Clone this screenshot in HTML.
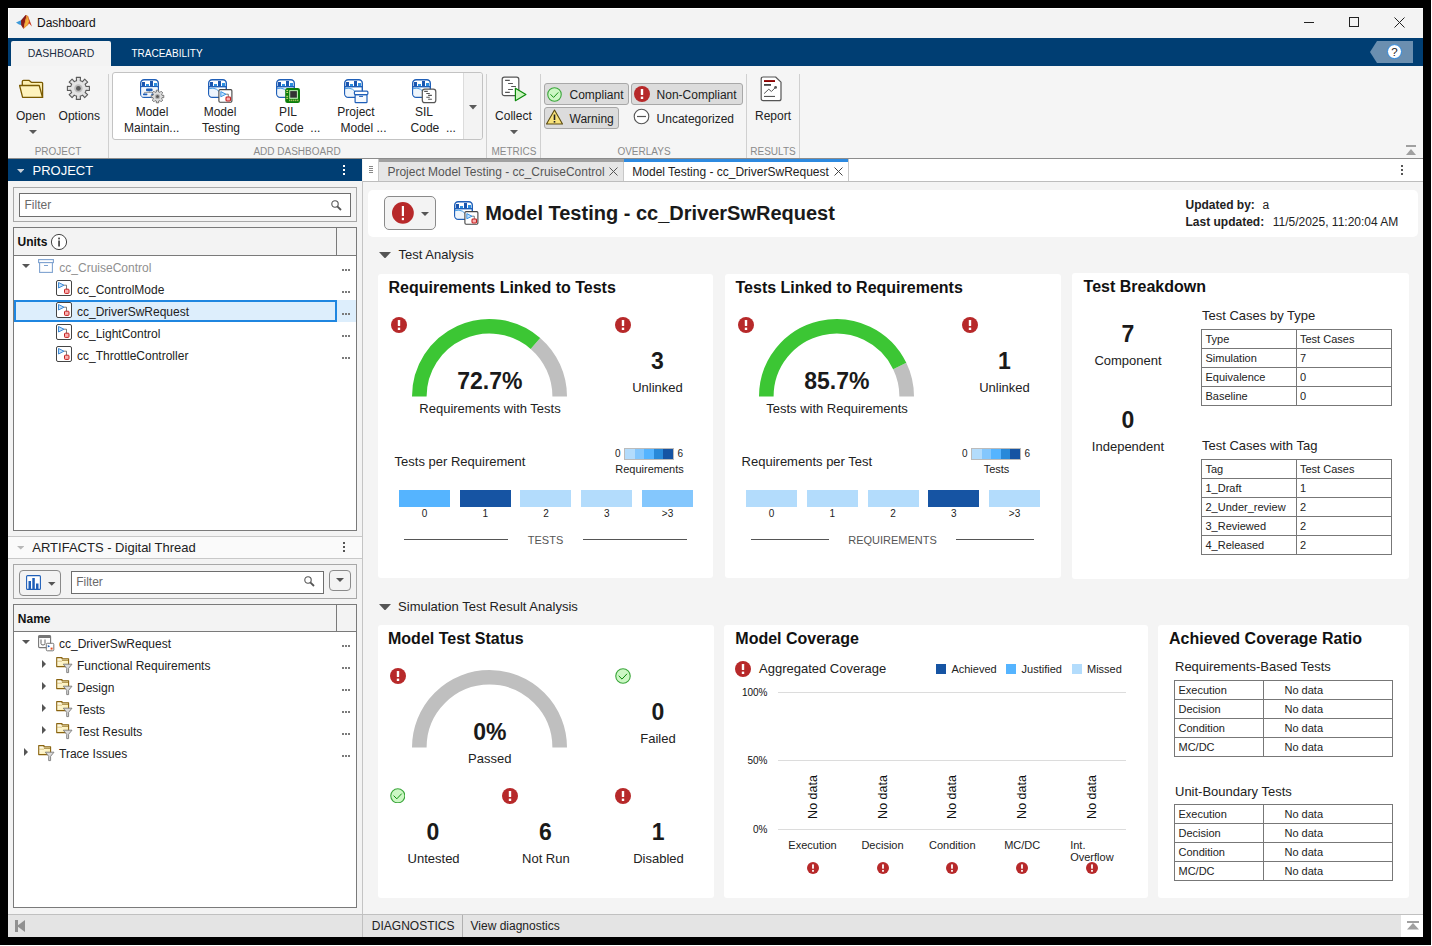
<!DOCTYPE html>
<html><head><meta charset="utf-8"><title>Dashboard</title><style>
*{margin:0;padding:0;box-sizing:border-box}
html,body{width:1432px;height:946px;overflow:hidden;background:#fff;font-family:"Liberation Sans", sans-serif}
.a{position:absolute}
.t{white-space:nowrap}
</style></head><body><div class="a" style="left:0px;top:0px;width:1431px;height:945px;background:#000"></div>
<div class="a" style="left:8px;top:8px;width:1415px;height:929px;background:#f3f3f3"></div>
<div class="a" style="left:8px;top:8px;width:1415px;height:30px;background:#f3f3f3;border-top:1px solid #fff;border-left:1px solid #fff"></div>
<svg class="a" style="left:12px;top:12px;" width="24" height="20" viewBox="0 0 24 20"><path d="M4 10.5 L9 8.2 L13.6 3.4 L12 10 L10 13.2 L7 12.4 Z" fill="#3d9ad9"/><path d="M9 8.6 L13.6 3 L14.8 3.2 L13.2 9.5 L11.5 17 L9.2 13.2 Z" fill="#8c1c16"/><path d="M14.6 3 L16.2 4.2 L17.4 9.5 L15.6 13.2 L11.5 17 L12.8 10.5 Z" fill="#e98b2c"/><path d="M13.8 9 L15.4 5 L16.8 9.5 L15.2 12.5 L12.2 15.8 Z" fill="#f3b23c"/><path d="M15.8 3.6 L19.6 13.6 L20 14.6 L17.2 11.4 L15.6 13.2 L17.2 9.5 Z" fill="#c8361e"/></svg>
<div class="a t" style="font-size:12px;line-height:14px;top:16.00px;color:#111;left:37px;">Dashboard</div>
<div class="a" style="left:1304px;top:22px;width:10px;height:1px;background:#222"></div>
<div class="a" style="left:1349px;top:17px;width:10px;height:10px;border:1px solid #222"></div>
<svg class="a" style="left:1394px;top:17px;" width="11" height="11" viewBox="0 0 11 11"><path d="M0.5 0.5 L10.5 10.5 M10.5 0.5 L0.5 10.5" stroke="#222" stroke-width="1"/></svg>
<div class="a" style="left:8px;top:38px;width:1415px;height:28px;background:#003e73"></div>
<div class="a" style="left:11px;top:41px;width:100px;height:25px;background:#f3f3f3;border-radius:2px 2px 0 0"></div>
<div class="a t" style="font-size:10.5px;line-height:13px;top:47.00px;color:#1d2f45;left:11.00px;width:100px;text-align:center;">DASHBOARD</div>
<div class="a t" style="font-size:10px;line-height:12px;top:48.00px;color:#ffffff;left:117.00px;width:100px;text-align:center;">TRACEABILITY</div>
<svg class="a" style="left:1369px;top:41px;" width="45" height="23" viewBox="0 0 45 23"><polygon points="8,0 44,0 44,22 8,22 1,11" fill="#6b8fb0"/><circle cx="25.5" cy="10.6" r="7" fill="#fff" stroke="#2f8be0" stroke-width="1"/><text x="25.5" y="14.6" text-anchor="middle" font-family="Liberation Sans" font-size="11.5" fill="#222">?</text></svg>
<div class="a" style="left:8px;top:66px;width:1415px;height:93px;background:#f5f5f5"></div>
<svg class="a" style="left:14px;top:72px;" width="32" height="32" viewBox="0 0 32 32"><path d="M8.3 13.5 V9.5 Q8.3 8.3 9.5 8.3 L14.9 8.3 L17.3 10.3 L27.6 10.3 Q28.6 10.3 28.6 11.3 L28.6 25.4 L10 25.4 Z" fill="#fdf0b0" stroke="#7a5a00" stroke-width="1.3" stroke-linejoin="round"/><path d="M5.6 13.5 L25.2 13.5 L28.5 25.4 L8.6 25.4 Z" fill="#fef3bd" stroke="#7a5a00" stroke-width="1.3" stroke-linejoin="round"/></svg>
<svg class="a" style="left:62px;top:72px;" width="32" height="32" viewBox="0 0 32 32"><path d="M23.70,13.38 L24.08,14.56 L27.40,14.30 L27.40,18.50 L24.08,18.24 L23.70,19.42 L23.14,20.53 L25.66,22.70 L22.70,25.66 L20.53,23.14 L19.42,23.70 L18.24,24.08 L18.50,27.40 L14.30,27.40 L14.56,24.08 L13.38,23.70 L12.27,23.14 L10.10,25.66 L7.14,22.70 L9.66,20.53 L9.10,19.42 L8.72,18.24 L5.40,18.50 L5.40,14.30 L8.72,14.56 L9.10,13.38 L9.66,12.27 L7.14,10.10 L10.10,7.14 L12.27,9.66 L13.38,9.10 L14.56,8.72 L14.30,5.40 L18.50,5.40 L18.24,8.72 L19.42,9.10 L20.53,9.66 L22.70,7.14 L25.66,10.10 L23.14,12.27 Z" fill="#e2e2e2" stroke="#5a5a5a" stroke-width="1.1" stroke-linejoin="round"/><circle cx="16.4" cy="16.4" r="4.2" fill="#bdbdbd"/><circle cx="16.4" cy="16.4" r="2.4" fill="#5a5a5a"/></svg>
<div class="a t" style="font-size:12px;line-height:14px;top:109.00px;color:#222;left:0.70px;width:60px;text-align:center;">Open</div>
<div class="a t" style="font-size:12px;line-height:14px;top:109.00px;color:#222;left:49.30px;width:60px;text-align:center;">Options</div>
<svg class="a" style="left:28.5px;top:130px;" width="8" height="4" viewBox="0 0 8 4"><polygon points="0,0 8,0 4.0,4" fill="#5a5a5a"/></svg>
<div class="a t" style="font-size:10px;line-height:12px;top:146.00px;color:#8a8a8a;left:8.00px;width:100px;text-align:center;">PROJECT</div>
<div class="a" style="left:108px;top:74px;width:1px;height:84px;background:#d0d0d0"></div>
<div class="a" style="left:112px;top:72px;width:371px;height:68px;background:#fff;border:1px solid #c3c3c3;border-radius:3px"></div>
<div class="a" style="left:463px;top:73px;width:19px;height:66px;background:#f3f3f3;border-left:1px solid #dcdcdc;border-radius:0 3px 3px 0"></div>
<svg class="a" style="left:469px;top:105px;" width="8" height="4.5" viewBox="0 0 8 4.5"><polygon points="0,0 8,0 4.0,4.5" fill="#5a5a5a"/></svg>
<svg class="a" style="left:140px;top:79px;" width="26" height="26" viewBox="0 0 26 26"><rect x="0.7" y="0.7" width="17.6" height="17.6" rx="3.5" fill="#fff" stroke="#1f5fb8" stroke-width="1.4"/><rect x="2" y="3" width="3" height="4" fill="#1a56b0"/><rect x="6" y="5" width="3" height="2" fill="#2d8fe0"/><rect x="10" y="2" width="3" height="5" fill="#1a56b0"/><rect x="14" y="4" width="3" height="3" fill="#2d8fe0"/><rect x="0.7" y="7" width="17.6" height="1.4" fill="#1f5fb8"/><rect x="1.4" y="8.2" width="16.2" height="9.4" fill="#f2f7fd"/><rect x="6" y="9.6" width="6.6" height="2.6" rx="1" fill="#1f5fb8"/><path d="M9.3 12.2 V13.4 M4.4 14.6 V13.4 H13.5 V14.6" fill="none" stroke="#777" stroke-width="0.7"/><rect x="3" y="14.4" width="4.4" height="1.8" rx="0.6" fill="#1f5fb8"/><rect x="11.3" y="14.4" width="3" height="1.8" rx="0.6" fill="#1f5fb8"/><path d="M21.84,15.70 L22.07,16.40 L23.79,16.30 L23.79,18.70 L22.07,18.60 L21.84,19.30 L21.51,19.96 L22.79,21.10 L21.10,22.79 L19.96,21.51 L19.30,21.84 L18.60,22.07 L18.70,23.79 L16.30,23.79 L16.40,22.07 L15.70,21.84 L15.04,21.51 L13.90,22.79 L12.21,21.10 L13.49,19.96 L13.16,19.30 L12.93,18.60 L11.21,18.70 L11.21,16.30 L12.93,16.40 L13.16,15.70 L13.49,15.04 L12.21,13.90 L13.90,12.21 L15.04,13.49 L15.70,13.16 L16.40,12.93 L16.30,11.21 L18.70,11.21 L18.60,12.93 L19.30,13.16 L19.96,13.49 L21.10,12.21 L22.79,13.90 L21.51,15.04 Z" fill="#dcdcdc" stroke="#6a6a6a" stroke-width="0.9" stroke-linejoin="round"/><circle cx="17.5" cy="17.5" r="2.6" fill="#b0b0b0"/><circle cx="17.5" cy="17.5" r="1.5" fill="#5a5a5a"/></svg>
<div class="a t" style="font-size:12px;line-height:14px;top:105.00px;color:#222;left:118.00px;width:68px;text-align:center;">Model</div>
<div class="a t" style="font-size:12px;line-height:14px;top:121.00px;color:#222;left:124px;">Maintain...</div>
<svg class="a" style="left:208px;top:79px;" width="26" height="26" viewBox="0 0 26 26"><rect x="0.7" y="0.7" width="17.6" height="17.6" rx="3.5" fill="#fff" stroke="#1f5fb8" stroke-width="1.4"/><rect x="2" y="3" width="3" height="4" fill="#1a56b0"/><rect x="6" y="5" width="3" height="2" fill="#2d8fe0"/><rect x="10" y="2" width="3" height="5" fill="#1a56b0"/><rect x="14" y="4" width="3" height="3" fill="#2d8fe0"/><rect x="0.7" y="7" width="17.6" height="1.4" fill="#1f5fb8"/><path d="M1.4 10.5 Q5 8.4 8.5 10.2 L13 14 L13 17.6 L3.5 17.6 Q1.4 17.6 1.4 15.5 Z" fill="#eef5fc"/><path d="M1.2 9.6 Q5 8.4 8.5 10.2 L12.5 13.8" fill="none" stroke="#2d8fe0" stroke-width="0.9"/><rect x="10.9" y="10.6" width="13" height="12.6" rx="1.2" fill="#fff" stroke="#444" stroke-width="1.1"/><polygon points="12.8,12.6 18,15.2 12.8,17.8" fill="#bfe0fb" stroke="#2f8be0" stroke-width="0.9"/><path d="M18 15.2 L20.3 15.2 L20.3 18" stroke="#444" fill="none" stroke-width="0.7"/><rect x="18" y="18" width="4.5" height="4" rx="0.9" fill="#f9b0b0" stroke="#c62020" stroke-width="1.1"/></svg>
<div class="a t" style="font-size:12px;line-height:14px;top:105.00px;color:#222;left:186.00px;width:68px;text-align:center;">Model</div>
<div class="a t" style="font-size:12px;line-height:14px;top:121.00px;color:#222;left:202px;">Testing</div>
<svg class="a" style="left:276px;top:79px;" width="26" height="26" viewBox="0 0 26 26"><rect x="0.7" y="0.7" width="17.6" height="17.6" rx="3.5" fill="#fff" stroke="#1f5fb8" stroke-width="1.4"/><rect x="2" y="3" width="3" height="4" fill="#1a56b0"/><rect x="6" y="5" width="3" height="2" fill="#2d8fe0"/><rect x="10" y="2" width="3" height="5" fill="#1a56b0"/><rect x="14" y="4" width="3" height="3" fill="#2d8fe0"/><rect x="0.7" y="7" width="17.6" height="1.4" fill="#1f5fb8"/><path d="M1.4 10.5 Q5 8.4 8.5 10.2 L13 14 L13 17.6 L3.5 17.6 Q1.4 17.6 1.4 15.5 Z" fill="#eef5fc"/><path d="M1.2 9.6 Q5 8.4 8.5 10.2 L12.5 13.8" fill="none" stroke="#2d8fe0" stroke-width="0.9"/><rect x="9.2" y="9" width="14.8" height="14.9" rx="2.2" fill="#0b7d0b"/><rect x="13.3" y="11.2" width="8.6" height="8.6" fill="#c8f7c0"/><rect x="14.2" y="12.1" width="6.7" height="6.6" fill="#333"/><path d="M10.3 11.4 h1.8 M10.3 13.4 h1.8 M10.3 17.3 h1.8 M10.3 19.3 h1.8" stroke="#f6e58a" stroke-width="0.9"/><path d="M13.8 22.2 v-1.6 M15.8 22.2 v-1.6 M17.8 22.2 v-1.6 M19.8 22.2 v-1.6 M21.8 22.2 v-1.6" stroke="#f6e58a" stroke-width="0.9"/></svg>
<div class="a t" style="font-size:12px;line-height:14px;top:105.00px;color:#222;left:254.00px;width:68px;text-align:center;">PIL</div>
<div class="a t" style="font-size:12px;line-height:14px;top:121.00px;color:#222;left:275px;">Code &nbsp;...</div>
<svg class="a" style="left:344px;top:79px;" width="26" height="26" viewBox="0 0 26 26"><rect x="0.7" y="0.7" width="17.6" height="17.6" rx="3.5" fill="#fff" stroke="#1f5fb8" stroke-width="1.4"/><rect x="2" y="3" width="3" height="4" fill="#1a56b0"/><rect x="6" y="5" width="3" height="2" fill="#2d8fe0"/><rect x="10" y="2" width="3" height="5" fill="#1a56b0"/><rect x="14" y="4" width="3" height="3" fill="#2d8fe0"/><rect x="0.7" y="7" width="17.6" height="1.4" fill="#1f5fb8"/><path d="M1.4 10.5 Q5 8.4 8.5 10.2 L13 14 L13 17.6 L3.5 17.6 Q1.4 17.6 1.4 15.5 Z" fill="#eef5fc"/><path d="M1.2 9.6 Q5 8.4 8.5 10.2 L12.5 13.8" fill="none" stroke="#2d8fe0" stroke-width="0.9"/><rect x="11.1" y="15.6" width="11.9" height="8.1" rx="0.8" fill="#f5f9fe" stroke="#1f5fb8" stroke-width="1.2"/><rect x="10.4" y="12.2" width="13.5" height="3.4" rx="1" fill="#fff" stroke="#1f5fb8" stroke-width="1.2"/><line x1="15.1" y1="17.4" x2="19" y2="17.4" stroke="#1f5fb8" stroke-width="1"/></svg>
<div class="a t" style="font-size:12px;line-height:14px;top:105.00px;color:#222;left:322.00px;width:68px;text-align:center;">Project</div>
<div class="a t" style="font-size:12px;line-height:14px;top:121.00px;color:#222;left:340.5px;">Model ...</div>
<svg class="a" style="left:412px;top:79px;" width="26" height="26" viewBox="0 0 26 26"><rect x="0.7" y="0.7" width="17.6" height="17.6" rx="3.5" fill="#fff" stroke="#1f5fb8" stroke-width="1.4"/><rect x="2" y="3" width="3" height="4" fill="#1a56b0"/><rect x="6" y="5" width="3" height="2" fill="#2d8fe0"/><rect x="10" y="2" width="3" height="5" fill="#1a56b0"/><rect x="14" y="4" width="3" height="3" fill="#2d8fe0"/><rect x="0.7" y="7" width="17.6" height="1.4" fill="#1f5fb8"/><path d="M1.4 10.5 Q5 8.4 8.5 10.2 L13 14 L13 17.6 L3.5 17.6 Q1.4 17.6 1.4 15.5 Z" fill="#eef5fc"/><path d="M1.2 9.6 Q5 8.4 8.5 10.2 L12.5 13.8" fill="none" stroke="#2d8fe0" stroke-width="0.9"/><rect x="10.3" y="10.2" width="13.5" height="13.5" rx="2.5" fill="#fff" stroke="#555" stroke-width="1.2"/><path d="M12.2 12.4 h3.6 M14.3 14.5 h3.5 M16.1 16.4 h3.8 M14.3 18.3 h3.5 M16.1 20.3 h3.8" stroke="#555" stroke-width="1.1"/></svg>
<div class="a t" style="font-size:12px;line-height:14px;top:105.00px;color:#222;left:390.00px;width:68px;text-align:center;">SIL</div>
<div class="a t" style="font-size:12px;line-height:14px;top:121.00px;color:#222;left:410.6px;">Code &nbsp;...</div>
<div class="a t" style="font-size:10px;line-height:12px;top:146.00px;color:#8a8a8a;left:227.00px;width:140px;text-align:center;">ADD DASHBOARD</div>
<div class="a" style="left:486px;top:74px;width:1px;height:84px;background:#d0d0d0"></div>
<svg class="a" style="left:498px;top:74px;" width="32" height="32" viewBox="0 0 32 32"><rect x="4.2" y="3.2" width="16.6" height="18.5" rx="2.2" fill="#fff" stroke="#555" stroke-width="1.2"/><path d="M7.1 6.4 h4.7 M10.1 9.5 h4.8 M13.2 12.5 h4.7 M10.1 15.5 h4.8 M7.1 18.4 h4.7" stroke="#555" stroke-width="1.2"/><polygon points="17.4,14.2 27.9,20.5 17.4,26.7" fill="#ccf5c0" stroke="#0a8a0a" stroke-width="1.2" stroke-linejoin="round"/></svg>
<div class="a t" style="font-size:12px;line-height:14px;top:109.00px;color:#222;left:483.40px;width:60px;text-align:center;">Collect</div>
<svg class="a" style="left:510px;top:129.5px;" width="8" height="4.2" viewBox="0 0 8 4.2"><polygon points="0,0 8,0 4.0,4.2" fill="#5a5a5a"/></svg>
<div class="a t" style="font-size:10px;line-height:12px;top:146.00px;color:#8a8a8a;left:474.00px;width:80px;text-align:center;">METRICS</div>
<div class="a" style="left:540px;top:74px;width:1px;height:84px;background:#d0d0d0"></div>
<div class="a" style="left:544px;top:83px;width:85px;height:22px;background:#dcdcdc;border:1px solid #a8a8a8;border-radius:3px"></div>
<svg class="a" style="left:547.0px;top:86.5px;" width="15.0" height="15.0" viewBox="0 0 15.0 15.0"><circle cx="7.5" cy="7.5" r="6.75" fill="#ccf7c4" stroke="#3aa63a" stroke-width="1.1"/><path d="M3.47 7.31 L6.56 10.41 L11.25 5.44" fill="none" stroke="#0a8a0a" stroke-width="0.94"/></svg>
<div class="a t" style="font-size:12px;line-height:14px;top:88.00px;color:#222;left:569.5px;">Compliant</div>
<div class="a" style="left:631px;top:83px;width:112px;height:22px;background:#dcdcdc;border:1px solid #a8a8a8;border-radius:3px"></div>
<svg class="a" style="left:634px;top:86px;" width="16" height="16" viewBox="0 0 16 16"><circle cx="8" cy="8" r="8" fill="#b7292a"/><rect x="6.80" y="3.00" width="2.40" height="6.00" rx="0.60" fill="#fff"/><rect x="6.80" y="10.60" width="2.40" height="2.40" fill="#fff"/></svg>
<div class="a t" style="font-size:12px;line-height:14px;top:88.00px;color:#222;left:656.6px;">Non-Compliant</div>
<div class="a" style="left:544px;top:107px;width:75px;height:22px;background:#dcdcdc;border:1px solid #a8a8a8;border-radius:3px"></div>
<svg class="a" style="left:546px;top:109px;" width="18" height="16" viewBox="0 0 18 16"><polygon points="8.5,1 16.5,15 0.5,15" fill="#f8e27a" stroke="#5a4a10" stroke-width="1.1" stroke-linejoin="round"/><rect x="7.7" y="5.5" width="1.6" height="5.5" fill="#222"/><rect x="7.7" y="12" width="1.6" height="1.6" fill="#222"/></svg>
<div class="a t" style="font-size:12px;line-height:14px;top:112.00px;color:#222;left:569.5px;">Warning</div>
<svg class="a" style="left:633px;top:108px;" width="17" height="17" viewBox="0 0 17 17"><circle cx="8.5" cy="8.5" r="7.3" fill="#fff" stroke="#555" stroke-width="1.1"/><line x1="4" y1="8.5" x2="13" y2="8.5" stroke="#555" stroke-width="1.2"/></svg>
<div class="a t" style="font-size:12px;line-height:14px;top:112.00px;color:#222;left:656.6px;">Uncategorized</div>
<div class="a t" style="font-size:10px;line-height:12px;top:146.00px;color:#8a8a8a;left:604.00px;width:80px;text-align:center;">OVERLAYS</div>
<div class="a" style="left:746px;top:74px;width:1px;height:84px;background:#d0d0d0"></div>
<svg class="a" style="left:756px;top:74px;" width="32" height="32" viewBox="0 0 32 32"><path d="M5.2 5 Q5.2 3 7.2 3 L19.6 3 L25 8.1 L25 24.7 Q25 26.7 23 26.7 L7.2 26.7 Q5.2 26.7 5.2 24.7 Z" fill="#fff" stroke="#555" stroke-width="1.2" stroke-linejoin="round"/><rect x="8" y="6.1" width="11" height="1.9" fill="#8b0000"/><rect x="8" y="10" width="7" height="1.8" fill="#444"/><path d="M8.1 19.6 L12.8 15.2 L15.4 17.5 L19.4 13.5" fill="none" stroke="#555" stroke-width="1"/><circle cx="19.6" cy="13.4" r="1.4" fill="#555"/><rect x="8" y="21.9" width="11" height="1.1" fill="#555"/></svg>
<div class="a t" style="font-size:12px;line-height:14px;top:109.00px;color:#222;left:743.00px;width:60px;text-align:center;">Report</div>
<div class="a t" style="font-size:10px;line-height:12px;top:146.00px;color:#8a8a8a;left:733.00px;width:80px;text-align:center;">RESULTS</div>
<div class="a" style="left:799px;top:74px;width:1px;height:84px;background:#d0d0d0"></div>
<div class="a" style="left:1406px;top:145px;width:10px;height:2px;background:#a0a0a0"></div>
<svg class="a" style="left:1406px;top:149px;" width="10" height="6" viewBox="0 0 10 6"><polygon points="5,0 10,6 0,6" fill="#a0a0a0"/></svg>
<div class="a" style="left:8px;top:158px;width:1415px;height:1px;background:#8c8c8c"></div>
<div class="a" style="left:8px;top:159px;width:354px;height:756px;background:#f3f3f3"></div>
<div class="a" style="left:362px;top:181px;width:1px;height:756px;background:#c4c4c4"></div>
<div class="a" style="left:8px;top:159px;width:354px;height:22px;background:#003e73"></div>
<svg class="a" style="left:16.5px;top:169px;" width="7.5" height="4" viewBox="0 0 7.5 4"><polygon points="0,0 7.5,0 3.75,4" fill="#c8d0da"/></svg>
<div class="a t" style="font-size:13px;line-height:16px;top:163.00px;color:#fff;left:32.5px;">PROJECT</div>
<div class="a" style="left:343px;top:165px;width:2px;height:2px;background:#fff"></div>
<div class="a" style="left:343px;top:169px;width:2px;height:2px;background:#fff"></div>
<div class="a" style="left:343px;top:173px;width:2px;height:2px;background:#fff"></div>
<div class="a" style="left:13px;top:187px;width:344px;height:35px;border:1px solid #a8a8a8;background:#f3f3f3"></div>
<div class="a" style="left:19px;top:193px;width:332px;height:24px;border:1px solid #6e6e6e;background:#fff"></div>
<div class="a t" style="font-size:12px;line-height:14px;top:198.00px;color:#6a6a6a;left:24.5px;">Filter</div>
<svg class="a" style="left:331px;top:200px;" width="11" height="11" viewBox="0 0 11 11"><circle cx="4" cy="4" r="3.2" fill="none" stroke="#555" stroke-width="1.1"/><line x1="6.3" y1="6.3" x2="10" y2="10" stroke="#555" stroke-width="1.8"/></svg>
<div class="a" style="left:13px;top:227px;width:344px;height:304px;border:1px solid #7a7a7a;background:#fff"></div>
<div class="a" style="left:14px;top:228px;width:342px;height:27px;background:#f3f3f3"></div>
<div class="a" style="left:14px;top:255px;width:342px;height:1px;background:#7a7a7a"></div>
<div class="a" style="left:336px;top:228px;width:1px;height:27px;background:#7a7a7a"></div>
<div class="a t" style="font-size:12px;line-height:14px;top:235.00px;color:#111;font-weight:bold;left:17.5px;">Units</div>
<svg class="a" style="left:50px;top:233px;" width="18" height="18" viewBox="0 0 18 18"><circle cx="9" cy="9" r="7.6" fill="#fff" stroke="#444" stroke-width="1"/><rect x="8.2" y="7.5" width="1.7" height="6" fill="#444"/><rect x="8.2" y="4.6" width="1.7" height="1.8" fill="#444"/></svg>
<svg class="a" style="left:22px;top:264px;" width="8" height="4" viewBox="0 0 8 4"><polygon points="0,0 8,0 4.0,4" fill="#555"/></svg>
<svg class="a" style="left:38px;top:259px;" width="16" height="14" viewBox="0 0 16 14"><rect x="0.6" y="0.6" width="14.8" height="3" fill="#fff" stroke="#7fa3d0" stroke-width="1.1"/><rect x="1.6" y="3.6" width="12.8" height="9.8" fill="#fff" stroke="#7fa3d0" stroke-width="1.1"/><line x1="6" y1="6.5" x2="10" y2="6.5" stroke="#7fa3d0" stroke-width="1"/></svg>
<div class="a t" style="font-size:12px;line-height:14px;top:261.00px;color:#8f8f8f;left:59.3px;">cc_CruiseControl</div>
<div class="a" style="left:342px;top:269px;width:2px;height:2px;background:#7a7a7a"></div>
<div class="a" style="left:345px;top:269px;width:2px;height:2px;background:#7a7a7a"></div>
<div class="a" style="left:348px;top:269px;width:2px;height:2px;background:#7a7a7a"></div>
<svg class="a" style="left:56px;top:280px;" width="17" height="17" viewBox="0 0 17 17"><rect x="0.5" y="0.5" width="15" height="15" rx="1.5" fill="#fff" stroke="#444" stroke-width="1"/><polygon points="2.5,2.5 8,5.2 2.5,8" fill="#bfe0fb" stroke="#2f7fd0" stroke-width="0.9"/><path d="M8 5.2 L10.5 5.2 L10.5 9" stroke="#444" fill="none" stroke-width="0.7"/><rect x="8.5" y="9.2" width="4.5" height="4.2" rx="0.8" fill="#f9b0b0" stroke="#c62020" stroke-width="1"/></svg>
<div class="a t" style="font-size:12px;line-height:14px;top:283.00px;color:#222;left:77px;">cc_ControlMode</div>
<div class="a" style="left:342px;top:291px;width:2px;height:2px;background:#7a7a7a"></div>
<div class="a" style="left:345px;top:291px;width:2px;height:2px;background:#7a7a7a"></div>
<div class="a" style="left:348px;top:291px;width:2px;height:2px;background:#7a7a7a"></div>
<div class="a" style="left:14px;top:300px;width:342px;height:22px;background:#ddeefc"></div>
<div class="a" style="left:14px;top:300px;width:323px;height:22px;border:2px solid #1f86e0"></div>
<svg class="a" style="left:56px;top:302px;" width="17" height="17" viewBox="0 0 17 17"><rect x="0.5" y="0.5" width="15" height="15" rx="1.5" fill="#fff" stroke="#444" stroke-width="1"/><polygon points="2.5,2.5 8,5.2 2.5,8" fill="#bfe0fb" stroke="#2f7fd0" stroke-width="0.9"/><path d="M8 5.2 L10.5 5.2 L10.5 9" stroke="#444" fill="none" stroke-width="0.7"/><rect x="8.5" y="9.2" width="4.5" height="4.2" rx="0.8" fill="#f9b0b0" stroke="#c62020" stroke-width="1"/></svg>
<div class="a t" style="font-size:12px;line-height:14px;top:305.00px;color:#222;left:77px;">cc_DriverSwRequest</div>
<div class="a" style="left:342px;top:313px;width:2px;height:2px;background:#7a7a7a"></div>
<div class="a" style="left:345px;top:313px;width:2px;height:2px;background:#7a7a7a"></div>
<div class="a" style="left:348px;top:313px;width:2px;height:2px;background:#7a7a7a"></div>
<svg class="a" style="left:56px;top:324px;" width="17" height="17" viewBox="0 0 17 17"><rect x="0.5" y="0.5" width="15" height="15" rx="1.5" fill="#fff" stroke="#444" stroke-width="1"/><polygon points="2.5,2.5 8,5.2 2.5,8" fill="#bfe0fb" stroke="#2f7fd0" stroke-width="0.9"/><path d="M8 5.2 L10.5 5.2 L10.5 9" stroke="#444" fill="none" stroke-width="0.7"/><rect x="8.5" y="9.2" width="4.5" height="4.2" rx="0.8" fill="#f9b0b0" stroke="#c62020" stroke-width="1"/></svg>
<div class="a t" style="font-size:12px;line-height:14px;top:327.00px;color:#222;left:77px;">cc_LightControl</div>
<div class="a" style="left:342px;top:335px;width:2px;height:2px;background:#7a7a7a"></div>
<div class="a" style="left:345px;top:335px;width:2px;height:2px;background:#7a7a7a"></div>
<div class="a" style="left:348px;top:335px;width:2px;height:2px;background:#7a7a7a"></div>
<svg class="a" style="left:56px;top:346px;" width="17" height="17" viewBox="0 0 17 17"><rect x="0.5" y="0.5" width="15" height="15" rx="1.5" fill="#fff" stroke="#444" stroke-width="1"/><polygon points="2.5,2.5 8,5.2 2.5,8" fill="#bfe0fb" stroke="#2f7fd0" stroke-width="0.9"/><path d="M8 5.2 L10.5 5.2 L10.5 9" stroke="#444" fill="none" stroke-width="0.7"/><rect x="8.5" y="9.2" width="4.5" height="4.2" rx="0.8" fill="#f9b0b0" stroke="#c62020" stroke-width="1"/></svg>
<div class="a t" style="font-size:12px;line-height:14px;top:349.00px;color:#222;left:77px;">cc_ThrottleController</div>
<div class="a" style="left:342px;top:357px;width:2px;height:2px;background:#7a7a7a"></div>
<div class="a" style="left:345px;top:357px;width:2px;height:2px;background:#7a7a7a"></div>
<div class="a" style="left:348px;top:357px;width:2px;height:2px;background:#7a7a7a"></div>
<div class="a" style="left:8px;top:536px;width:354px;height:1px;background:#c8c8c8"></div>
<div class="a" style="left:8px;top:537px;width:354px;height:21px;background:#fafafa"></div>
<div class="a" style="left:8px;top:558px;width:354px;height:1px;background:#c8c8c8"></div>
<svg class="a" style="left:16.5px;top:546.3px;" width="7.5" height="3.5" viewBox="0 0 7.5 3.5"><polygon points="0,0 7.5,0 3.75,3.5" fill="#b8b8b8"/></svg>
<div class="a t" style="font-size:13px;line-height:16px;top:540.00px;color:#222;left:32.3px;">ARTIFACTS - Digital Thread</div>
<div class="a" style="left:343px;top:542px;width:2px;height:2px;background:#555"></div>
<div class="a" style="left:343px;top:546px;width:2px;height:2px;background:#555"></div>
<div class="a" style="left:343px;top:550px;width:2px;height:2px;background:#555"></div>
<div class="a" style="left:13px;top:564px;width:344px;height:35px;border:1px solid #a8a8a8;background:#f3f3f3"></div>
<div class="a" style="left:19px;top:570px;width:42px;height:26px;border:1px solid #8a8a8a;border-radius:4px;background:#f3f3f3"></div>
<svg class="a" style="left:26px;top:575px;" width="15" height="15" viewBox="0 0 15 15"><rect x="0.6" y="0.6" width="13.8" height="13.8" rx="1" fill="#fff" stroke="#1f5fb8" stroke-width="1.1"/><rect x="2.5" y="6" width="2.5" height="8" fill="#1f5fb8"/><rect x="6.3" y="3" width="2.5" height="11" fill="#1f5fb8"/><rect x="10" y="8.5" width="2.5" height="5.5" fill="#1f5fb8"/></svg>
<svg class="a" style="left:48px;top:582px;" width="7.5" height="3.8" viewBox="0 0 7.5 3.8"><polygon points="0,0 7.5,0 3.75,3.8" fill="#555"/></svg>
<div class="a" style="left:71px;top:571px;width:253px;height:23px;border:1px solid #6e6e6e;background:#fff"></div>
<div class="a t" style="font-size:12px;line-height:14px;top:575.00px;color:#6a6a6a;left:76.2px;">Filter</div>
<svg class="a" style="left:304px;top:576px;" width="11" height="11" viewBox="0 0 11 11"><circle cx="4" cy="4" r="3.2" fill="none" stroke="#555" stroke-width="1.1"/><line x1="6.3" y1="6.3" x2="10" y2="10" stroke="#555" stroke-width="1.8"/></svg>
<div class="a" style="left:329px;top:570px;width:22px;height:21px;border:1px solid #8a8a8a;border-radius:4px;background:#f3f3f3"></div>
<svg class="a" style="left:336px;top:578px;" width="8" height="4" viewBox="0 0 8 4"><polygon points="0,0 8,0 4.0,4" fill="#555"/></svg>
<div class="a" style="left:13px;top:604px;width:344px;height:304px;border:1px solid #7a7a7a;background:#fff"></div>
<div class="a" style="left:14px;top:605px;width:342px;height:26px;background:#f3f3f3"></div>
<div class="a" style="left:14px;top:631px;width:342px;height:1px;background:#7a7a7a"></div>
<div class="a" style="left:336px;top:605px;width:1px;height:26px;background:#7a7a7a"></div>
<div class="a t" style="font-size:12px;line-height:14px;top:612.00px;color:#111;font-weight:bold;left:17.8px;">Name</div>
<svg class="a" style="left:22px;top:640px;" width="8" height="4" viewBox="0 0 8 4"><polygon points="0,0 8,0 4.0,4" fill="#555"/></svg>
<svg class="a" style="left:38px;top:635px;" width="17" height="17" viewBox="0 0 17 17"><rect x="0.6" y="0.6" width="12" height="12" rx="1" fill="#fff" stroke="#777" stroke-width="1.1"/><rect x="0.6" y="0.6" width="12" height="2.4" fill="#777"/><path d="M3 4.5 V8.5 Q3 10 5 10 Q7 10 7 8.5 V4.5" fill="none" stroke="#555" stroke-width="0.9"/><rect x="8.3" y="8.3" width="7.5" height="7.5" rx="1" fill="#fff" stroke="#777" stroke-width="1"/><polygon points="9.8,10 12.2,11.3 9.8,12.6" fill="#1f5fb8"/><rect x="12.6" y="12.6" width="2" height="2" fill="#e8501e"/></svg>
<div class="a t" style="font-size:12px;line-height:14px;top:637.00px;color:#222;left:59px;">cc_DriverSwRequest</div>
<div class="a" style="left:342px;top:645px;width:2px;height:2px;background:#7a7a7a"></div>
<div class="a" style="left:345px;top:645px;width:2px;height:2px;background:#7a7a7a"></div>
<div class="a" style="left:348px;top:645px;width:2px;height:2px;background:#7a7a7a"></div>
<svg class="a" style="left:42px;top:660px;" width="4" height="8" viewBox="0 0 4 8"><polygon points="0,0 4,4.0 0,8" fill="#555"/></svg>
<svg class="a" style="left:56px;top:656px;" width="18" height="18" viewBox="0 0 18 18"><defs><linearGradient id="fg" x1="0" y1="0" x2="1" y2="1"><stop offset="0" stop-color="#fffef5"/><stop offset="1" stop-color="#fbeaa0"/></linearGradient></defs><path d="M0.7 1.6 H6 V2.7 H12.6 V10.6 H0.7 Z" fill="url(#fg)" stroke="#8a6410" stroke-width="1.1" stroke-linejoin="round"/><path d="M6 4.2 H12.2" stroke="#8a6410" stroke-width="0.9"/><path d="M0.7 5.2 H6" stroke="#c9a850" stroke-width="0.6"/><polygon points="7.3,8.2 16,8.2 12.6,12.3 12.6,16.6 10.7,16.6 10.7,12.3" fill="#dadada" stroke="#7a7a7a" stroke-width="0.9" stroke-linejoin="round"/></svg>
<div class="a t" style="font-size:12px;line-height:14px;top:659.00px;color:#222;left:77px;">Functional Requirements</div>
<div class="a" style="left:342px;top:667px;width:2px;height:2px;background:#7a7a7a"></div>
<div class="a" style="left:345px;top:667px;width:2px;height:2px;background:#7a7a7a"></div>
<div class="a" style="left:348px;top:667px;width:2px;height:2px;background:#7a7a7a"></div>
<svg class="a" style="left:42px;top:682px;" width="4" height="8" viewBox="0 0 4 8"><polygon points="0,0 4,4.0 0,8" fill="#555"/></svg>
<svg class="a" style="left:56px;top:678px;" width="18" height="18" viewBox="0 0 18 18"><defs><linearGradient id="fg" x1="0" y1="0" x2="1" y2="1"><stop offset="0" stop-color="#fffef5"/><stop offset="1" stop-color="#fbeaa0"/></linearGradient></defs><path d="M0.7 1.6 H6 V2.7 H12.6 V10.6 H0.7 Z" fill="url(#fg)" stroke="#8a6410" stroke-width="1.1" stroke-linejoin="round"/><path d="M6 4.2 H12.2" stroke="#8a6410" stroke-width="0.9"/><path d="M0.7 5.2 H6" stroke="#c9a850" stroke-width="0.6"/><polygon points="7.3,8.2 16,8.2 12.6,12.3 12.6,16.6 10.7,16.6 10.7,12.3" fill="#dadada" stroke="#7a7a7a" stroke-width="0.9" stroke-linejoin="round"/></svg>
<div class="a t" style="font-size:12px;line-height:14px;top:681.00px;color:#222;left:77px;">Design</div>
<div class="a" style="left:342px;top:689px;width:2px;height:2px;background:#7a7a7a"></div>
<div class="a" style="left:345px;top:689px;width:2px;height:2px;background:#7a7a7a"></div>
<div class="a" style="left:348px;top:689px;width:2px;height:2px;background:#7a7a7a"></div>
<svg class="a" style="left:42px;top:704px;" width="4" height="8" viewBox="0 0 4 8"><polygon points="0,0 4,4.0 0,8" fill="#555"/></svg>
<svg class="a" style="left:56px;top:700px;" width="18" height="18" viewBox="0 0 18 18"><defs><linearGradient id="fg" x1="0" y1="0" x2="1" y2="1"><stop offset="0" stop-color="#fffef5"/><stop offset="1" stop-color="#fbeaa0"/></linearGradient></defs><path d="M0.7 1.6 H6 V2.7 H12.6 V10.6 H0.7 Z" fill="url(#fg)" stroke="#8a6410" stroke-width="1.1" stroke-linejoin="round"/><path d="M6 4.2 H12.2" stroke="#8a6410" stroke-width="0.9"/><path d="M0.7 5.2 H6" stroke="#c9a850" stroke-width="0.6"/><polygon points="7.3,8.2 16,8.2 12.6,12.3 12.6,16.6 10.7,16.6 10.7,12.3" fill="#dadada" stroke="#7a7a7a" stroke-width="0.9" stroke-linejoin="round"/></svg>
<div class="a t" style="font-size:12px;line-height:14px;top:703.00px;color:#222;left:77px;">Tests</div>
<div class="a" style="left:342px;top:711px;width:2px;height:2px;background:#7a7a7a"></div>
<div class="a" style="left:345px;top:711px;width:2px;height:2px;background:#7a7a7a"></div>
<div class="a" style="left:348px;top:711px;width:2px;height:2px;background:#7a7a7a"></div>
<svg class="a" style="left:42px;top:726px;" width="4" height="8" viewBox="0 0 4 8"><polygon points="0,0 4,4.0 0,8" fill="#555"/></svg>
<svg class="a" style="left:56px;top:722px;" width="18" height="18" viewBox="0 0 18 18"><defs><linearGradient id="fg" x1="0" y1="0" x2="1" y2="1"><stop offset="0" stop-color="#fffef5"/><stop offset="1" stop-color="#fbeaa0"/></linearGradient></defs><path d="M0.7 1.6 H6 V2.7 H12.6 V10.6 H0.7 Z" fill="url(#fg)" stroke="#8a6410" stroke-width="1.1" stroke-linejoin="round"/><path d="M6 4.2 H12.2" stroke="#8a6410" stroke-width="0.9"/><path d="M0.7 5.2 H6" stroke="#c9a850" stroke-width="0.6"/><polygon points="7.3,8.2 16,8.2 12.6,12.3 12.6,16.6 10.7,16.6 10.7,12.3" fill="#dadada" stroke="#7a7a7a" stroke-width="0.9" stroke-linejoin="round"/></svg>
<div class="a t" style="font-size:12px;line-height:14px;top:725.00px;color:#222;left:77px;">Test Results</div>
<div class="a" style="left:342px;top:733px;width:2px;height:2px;background:#7a7a7a"></div>
<div class="a" style="left:345px;top:733px;width:2px;height:2px;background:#7a7a7a"></div>
<div class="a" style="left:348px;top:733px;width:2px;height:2px;background:#7a7a7a"></div>
<svg class="a" style="left:24px;top:748px;" width="4" height="8" viewBox="0 0 4 8"><polygon points="0,0 4,4.0 0,8" fill="#555"/></svg>
<svg class="a" style="left:38px;top:744px;" width="18" height="18" viewBox="0 0 18 18"><defs><linearGradient id="fg" x1="0" y1="0" x2="1" y2="1"><stop offset="0" stop-color="#fffef5"/><stop offset="1" stop-color="#fbeaa0"/></linearGradient></defs><path d="M0.7 1.6 H6 V2.7 H12.6 V10.6 H0.7 Z" fill="url(#fg)" stroke="#8a6410" stroke-width="1.1" stroke-linejoin="round"/><path d="M6 4.2 H12.2" stroke="#8a6410" stroke-width="0.9"/><path d="M0.7 5.2 H6" stroke="#c9a850" stroke-width="0.6"/><polygon points="7.3,8.2 16,8.2 12.6,12.3 12.6,16.6 10.7,16.6 10.7,12.3" fill="#dadada" stroke="#7a7a7a" stroke-width="0.9" stroke-linejoin="round"/></svg>
<div class="a t" style="font-size:12px;line-height:14px;top:747.00px;color:#222;left:59px;">Trace Issues</div>
<div class="a" style="left:342px;top:755px;width:2px;height:2px;background:#7a7a7a"></div>
<div class="a" style="left:345px;top:755px;width:2px;height:2px;background:#7a7a7a"></div>
<div class="a" style="left:348px;top:755px;width:2px;height:2px;background:#7a7a7a"></div>
<div class="a" style="left:8px;top:914px;width:1415px;height:1px;background:#c0c0c0"></div>
<div class="a" style="left:8px;top:915px;width:1415px;height:22px;background:#e4e4e4"></div>
<div class="a" style="left:362px;top:915px;width:1px;height:22px;background:#c0c0c0"></div>
<div class="a" style="left:462px;top:915px;width:1px;height:22px;background:#b0b0b0"></div>
<div class="a" style="left:15px;top:920px;width:2.5px;height:12px;background:#909090"></div>
<svg class="a" style="left:17px;top:920px;" width="8" height="12" viewBox="0 0 8 12"><polygon points="8,0 8,12 0,6" fill="#909090"/></svg>
<div class="a t" style="font-size:12px;line-height:14px;top:919.00px;color:#222;left:371.8px;">DIAGNOSTICS</div>
<div class="a t" style="font-size:12px;line-height:14px;top:919.00px;color:#222;left:470.5px;">View diagnostics</div>
<div class="a" style="left:1401px;top:915px;width:22px;height:22px;background:#fff"></div>
<div class="a" style="left:1407px;top:921px;width:12px;height:2px;background:#a0a0a0"></div>
<svg class="a" style="left:1407px;top:923.2px;" width="12" height="6.5" viewBox="0 0 12 6.5"><polygon points="6,0 12,6.5 0,6.5" fill="#a0a0a0"/></svg>
<div class="a" style="left:363px;top:159px;width:1060px;height:755px;background:#f4f4f4"></div>
<div class="a" style="left:363px;top:159px;width:1060px;height:22px;background:#fff"></div>
<div class="a" style="left:363px;top:181px;width:1060px;height:1px;background:#bdbdbd"></div>
<div class="a" style="left:369px;top:166px;width:4px;height:1px;background:#888"></div>
<div class="a" style="left:369px;top:168px;width:4px;height:1px;background:#888"></div>
<div class="a" style="left:369px;top:170px;width:4px;height:1px;background:#888"></div>
<div class="a" style="left:369px;top:172px;width:4px;height:1px;background:#888"></div>
<div class="a" style="left:378px;top:159px;width:1px;height:22px;background:#c8c8c8"></div>
<div class="a" style="left:379px;top:159px;width:245px;height:3px;background:#a0a0a0"></div>
<div class="a" style="left:379px;top:162px;width:245px;height:19px;background:#e6e6e6"></div>
<div class="a" style="left:623px;top:162px;width:1px;height:19px;background:#c8c8c8"></div>
<div class="a t" style="font-size:12px;line-height:14px;top:165.00px;color:#555;left:387.4px;">Project Model Testing - cc_CruiseControl</div>
<svg class="a" style="left:609px;top:167px;" width="9" height="9" viewBox="0 0 9 9"><path d="M0.5 0.5 L8.5 8.5 M8.5 0.5 L0.5 8.5" stroke="#555" stroke-width="1"/></svg>
<div class="a" style="left:624px;top:159px;width:224px;height:3px;background:#2d8ae0"></div>
<div class="a" style="left:848px;top:159px;width:1px;height:22px;background:#c8c8c8"></div>
<div class="a t" style="font-size:12px;line-height:14px;top:165.00px;color:#222;left:632.3px;">Model Testing - cc_DriverSwRequest</div>
<svg class="a" style="left:834px;top:167px;" width="9" height="9" viewBox="0 0 9 9"><path d="M0.5 0.5 L8.5 8.5 M8.5 0.5 L0.5 8.5" stroke="#444" stroke-width="1"/></svg>
<div class="a" style="left:1401px;top:165px;width:2px;height:2px;background:#555"></div>
<div class="a" style="left:1401px;top:169px;width:2px;height:2px;background:#555"></div>
<div class="a" style="left:1401px;top:173px;width:2px;height:2px;background:#555"></div>
<div class="a" style="left:368px;top:190px;width:1050px;height:47px;background:#fff;border-radius:5px"></div>
<div class="a" style="left:384px;top:196px;width:52px;height:34px;background:#f3f3f3;border:1px solid #8a8a8a;border-radius:5px"></div>
<svg class="a" style="left:392.1px;top:202.1px;" width="21.8" height="21.8" viewBox="0 0 21.8 21.8"><circle cx="10.9" cy="10.9" r="10.9" fill="#b7292a"/><rect x="9.81" y="4.02" width="2.18" height="10.01" fill="#fff"/><rect x="9.81" y="15.80" width="2.18" height="2.38" fill="#fff"/></svg>
<svg class="a" style="left:421px;top:212px;" width="8" height="4" viewBox="0 0 8 4"><polygon points="0,0 8,0 4.0,4" fill="#555"/></svg>
<svg class="a" style="left:454px;top:201px;" width="26" height="26" viewBox="0 0 26 26"><rect x="0.7" y="0.7" width="17.6" height="17.6" rx="3.5" fill="#fff" stroke="#1f5fb8" stroke-width="1.4"/><rect x="2" y="3" width="3" height="4" fill="#1a56b0"/><rect x="6" y="5" width="3" height="2" fill="#2d8fe0"/><rect x="10" y="2" width="3" height="5" fill="#1a56b0"/><rect x="14" y="4" width="3" height="3" fill="#2d8fe0"/><rect x="0.7" y="7" width="17.6" height="1.4" fill="#1f5fb8"/><path d="M1.4 10.5 Q5 8.4 8.5 10.2 L13 14 L13 17.6 L3.5 17.6 Q1.4 17.6 1.4 15.5 Z" fill="#eef5fc"/><path d="M1.2 9.6 Q5 8.4 8.5 10.2 L12.5 13.8" fill="none" stroke="#2d8fe0" stroke-width="0.9"/><rect x="10.9" y="10.6" width="13" height="12.6" rx="1.2" fill="#fff" stroke="#444" stroke-width="1.1"/><polygon points="12.8,12.6 18,15.2 12.8,17.8" fill="#bfe0fb" stroke="#2f8be0" stroke-width="0.9"/><path d="M18 15.2 L20.3 15.2 L20.3 18" stroke="#444" fill="none" stroke-width="0.7"/><rect x="18" y="18" width="4.5" height="4" rx="0.9" fill="#f9b0b0" stroke="#c62020" stroke-width="1.1"/></svg>
<div class="a t" style="font-size:20px;line-height:24px;top:201.00px;color:#1a1a1a;font-weight:bold;left:485.2px;">Model Testing - cc_DriverSwRequest</div>
<div class="a t" style="font-size:12px;line-height:14px;top:198.00px;color:#222;font-weight:bold;left:1185.5px;">Updated by:</div>
<div class="a t" style="font-size:12px;line-height:14px;top:198.00px;color:#222;left:1262.6px;">a</div>
<div class="a t" style="font-size:12px;line-height:14px;top:215.00px;color:#222;font-weight:bold;left:1185.5px;">Last updated:</div>
<div class="a t" style="font-size:12px;line-height:14px;top:215.00px;color:#222;left:1272.7px;">11/5/2025, 11:20:04 AM</div>
<svg class="a" style="left:379px;top:251.7px;" width="12" height="6.5" viewBox="0 0 12 6.5"><polygon points="0,0 12,0 6.0,6.5" fill="#555"/></svg>
<div class="a t" style="font-size:13px;line-height:16px;top:247.00px;color:#222;left:398.6px;">Test Analysis</div>
<div class="a" style="left:378px;top:274px;width:335px;height:304px;background:#fff;border-radius:3px"></div>
<div class="a t" style="font-size:16px;line-height:19px;top:278.00px;color:#111;font-weight:bold;left:388.5px;">Requirements Linked to Tests</div>
<svg class="a" style="left:391px;top:317px;" width="16" height="16" viewBox="0 0 16 16"><circle cx="8" cy="8" r="8" fill="#b7292a"/><rect x="6.80" y="3.00" width="2.40" height="6.00" rx="0.60" fill="#fff"/><rect x="6.80" y="10.60" width="2.40" height="2.40" fill="#fff"/></svg>
<svg class="a" style="left:410.3px;top:317.3px;" width="159.0" height="79.5" viewBox="0 0 159.0 79.5"><path d="M125.43 26.41 A70.2 70.2 0 0 1 149.70 79.50" fill="none" stroke="#bfbfbf" stroke-width="14.6"/><path d="M9.30 79.50 A70.2 70.2 0 0 1 125.43 26.41" fill="none" stroke="#3cc634" stroke-width="14.6"/></svg>
<div class="a t" style="font-size:23px;line-height:28px;top:367.00px;color:#1a1a1a;font-weight:bold;left:414.80px;width:150px;text-align:center;">72.7%</div>
<div class="a t" style="font-size:13px;line-height:16px;top:401.00px;color:#222;left:390.00px;width:200px;text-align:center;">Requirements with Tests</div>
<svg class="a" style="left:615px;top:317px;" width="16" height="16" viewBox="0 0 16 16"><circle cx="8" cy="8" r="8" fill="#b7292a"/><rect x="6.80" y="3.00" width="2.40" height="6.00" rx="0.60" fill="#fff"/><rect x="6.80" y="10.60" width="2.40" height="2.40" fill="#fff"/></svg>
<div class="a t" style="font-size:23px;line-height:28px;top:347.00px;color:#1a1a1a;font-weight:bold;left:627.50px;width:60px;text-align:center;">3</div>
<div class="a t" style="font-size:13px;line-height:16px;top:380.00px;color:#222;left:607.50px;width:100px;text-align:center;">Unlinked</div>
<div class="a t" style="font-size:13px;line-height:16px;top:454.00px;color:#222;left:394.6px;">Tests per Requirement</div>
<div class="a t" style="font-size:10px;line-height:12px;top:448.00px;color:#222;left:600.50px;width:20px;text-align:right;">0</div>
<div class="a" style="left:624px;top:448px;width:50px;height:12px;border:1px solid #bbb;background:linear-gradient(90deg,#b3dcfc 0 20%,#84c7fd 20% 40%,#55b4ff 40% 60%,#2889d9 60% 80%,#1654a3 80% 100%)"></div>
<div class="a t" style="font-size:10px;line-height:12px;top:448.00px;color:#222;left:677.5px;">6</div>
<div class="a t" style="font-size:11px;line-height:13px;top:463.00px;color:#222;left:599.50px;width:100px;text-align:center;">Requirements</div>
<div class="a" style="left:399px;top:490px;width:51px;height:17px;background:#55b4ff"></div>
<div class="a t" style="font-size:10px;line-height:12px;top:508.00px;color:#222;left:404.50px;width:40px;text-align:center;">0</div>
<div class="a" style="left:460px;top:490px;width:51px;height:17px;background:#1654a3"></div>
<div class="a t" style="font-size:10px;line-height:12px;top:508.00px;color:#222;left:465.25px;width:40px;text-align:center;">1</div>
<div class="a" style="left:520px;top:490px;width:51px;height:17px;background:#b3dcfc"></div>
<div class="a t" style="font-size:10px;line-height:12px;top:508.00px;color:#222;left:526.00px;width:40px;text-align:center;">2</div>
<div class="a" style="left:581px;top:490px;width:51px;height:17px;background:#b3dcfc"></div>
<div class="a t" style="font-size:10px;line-height:12px;top:508.00px;color:#222;left:586.75px;width:40px;text-align:center;">3</div>
<div class="a" style="left:642px;top:490px;width:51px;height:17px;background:#84c7fd"></div>
<div class="a t" style="font-size:10px;line-height:12px;top:508.00px;color:#222;left:647.50px;width:40px;text-align:center;">&gt;3</div>
<div class="a" style="left:404px;top:539px;width:104px;height:1px;background:#555"></div>
<div class="a" style="left:583px;top:539px;width:104px;height:1px;background:#555"></div>
<div class="a t" style="font-size:11px;line-height:13px;top:534.00px;color:#555;left:475.50px;width:140px;text-align:center;">TESTS</div>
<div class="a" style="left:725px;top:274px;width:336px;height:304px;background:#fff;border-radius:3px"></div>
<div class="a t" style="font-size:16px;line-height:19px;top:278.00px;color:#111;font-weight:bold;left:735.5px;">Tests Linked to Requirements</div>
<svg class="a" style="left:738px;top:317px;" width="16" height="16" viewBox="0 0 16 16"><circle cx="8" cy="8" r="8" fill="#b7292a"/><rect x="6.80" y="3.00" width="2.40" height="6.00" rx="0.60" fill="#fff"/><rect x="6.80" y="10.60" width="2.40" height="2.40" fill="#fff"/></svg>
<svg class="a" style="left:757.3px;top:317.3px;" width="159.0" height="79.5" viewBox="0 0 159.0 79.5"><path d="M142.73 49.01 A70.2 70.2 0 0 1 149.70 79.50" fill="none" stroke="#bfbfbf" stroke-width="14.6"/><path d="M9.30 79.50 A70.2 70.2 0 0 1 142.73 49.01" fill="none" stroke="#3cc634" stroke-width="14.6"/></svg>
<div class="a t" style="font-size:23px;line-height:28px;top:367.00px;color:#1a1a1a;font-weight:bold;left:761.80px;width:150px;text-align:center;">85.7%</div>
<div class="a t" style="font-size:13px;line-height:16px;top:401.00px;color:#222;left:737.00px;width:200px;text-align:center;">Tests with Requirements</div>
<svg class="a" style="left:962px;top:317px;" width="16" height="16" viewBox="0 0 16 16"><circle cx="8" cy="8" r="8" fill="#b7292a"/><rect x="6.80" y="3.00" width="2.40" height="6.00" rx="0.60" fill="#fff"/><rect x="6.80" y="10.60" width="2.40" height="2.40" fill="#fff"/></svg>
<div class="a t" style="font-size:23px;line-height:28px;top:347.00px;color:#1a1a1a;font-weight:bold;left:974.50px;width:60px;text-align:center;">1</div>
<div class="a t" style="font-size:13px;line-height:16px;top:380.00px;color:#222;left:954.50px;width:100px;text-align:center;">Unlinked</div>
<div class="a t" style="font-size:13px;line-height:16px;top:454.00px;color:#222;left:741.6px;">Requirements per Test</div>
<div class="a t" style="font-size:10px;line-height:12px;top:448.00px;color:#222;left:947.50px;width:20px;text-align:right;">0</div>
<div class="a" style="left:971px;top:448px;width:50px;height:12px;border:1px solid #bbb;background:linear-gradient(90deg,#b3dcfc 0 20%,#84c7fd 20% 40%,#55b4ff 40% 60%,#2889d9 60% 80%,#1654a3 80% 100%)"></div>
<div class="a t" style="font-size:10px;line-height:12px;top:448.00px;color:#222;left:1024.5px;">6</div>
<div class="a t" style="font-size:11px;line-height:13px;top:463.00px;color:#222;left:946.50px;width:100px;text-align:center;">Tests</div>
<div class="a" style="left:746px;top:490px;width:51px;height:17px;background:#b3dcfc"></div>
<div class="a t" style="font-size:10px;line-height:12px;top:508.00px;color:#222;left:751.50px;width:40px;text-align:center;">0</div>
<div class="a" style="left:807px;top:490px;width:51px;height:17px;background:#b3dcfc"></div>
<div class="a t" style="font-size:10px;line-height:12px;top:508.00px;color:#222;left:812.25px;width:40px;text-align:center;">1</div>
<div class="a" style="left:868px;top:490px;width:51px;height:17px;background:#b3dcfc"></div>
<div class="a t" style="font-size:10px;line-height:12px;top:508.00px;color:#222;left:873.00px;width:40px;text-align:center;">2</div>
<div class="a" style="left:928px;top:490px;width:51px;height:17px;background:#1654a3"></div>
<div class="a t" style="font-size:10px;line-height:12px;top:508.00px;color:#222;left:933.75px;width:40px;text-align:center;">3</div>
<div class="a" style="left:989px;top:490px;width:51px;height:17px;background:#b3dcfc"></div>
<div class="a t" style="font-size:10px;line-height:12px;top:508.00px;color:#222;left:994.50px;width:40px;text-align:center;">&gt;3</div>
<div class="a" style="left:751px;top:539px;width:78px;height:1px;background:#555"></div>
<div class="a" style="left:956px;top:539px;width:78px;height:1px;background:#555"></div>
<div class="a t" style="font-size:11px;line-height:13px;top:534.00px;color:#555;left:822.50px;width:140px;text-align:center;">REQUIREMENTS</div>
<div class="a" style="left:1072px;top:273px;width:337px;height:306px;background:#fff;border-radius:3px"></div>
<div class="a t" style="font-size:16px;line-height:19px;top:277.00px;color:#111;font-weight:bold;left:1083.6px;">Test Breakdown</div>
<div class="a t" style="font-size:23px;line-height:28px;top:320.00px;color:#1a1a1a;font-weight:bold;left:1098.00px;width:60px;text-align:center;">7</div>
<div class="a t" style="font-size:13px;line-height:16px;top:353.00px;color:#222;left:1068.00px;width:120px;text-align:center;">Component</div>
<div class="a t" style="font-size:23px;line-height:28px;top:406.00px;color:#1a1a1a;font-weight:bold;left:1098.00px;width:60px;text-align:center;">0</div>
<div class="a t" style="font-size:13px;line-height:16px;top:439.00px;color:#222;left:1068.00px;width:120px;text-align:center;">Independent</div>
<div class="a t" style="font-size:13px;line-height:16px;top:308.00px;color:#222;left:1202px;">Test Cases by Type</div>
<div class="a" style="left:1201px;top:329px;width:191px;height:77px;border:1px solid #777;background:#fff"></div>
<div class="a" style="left:1201px;top:348px;width:191px;height:1px;background:#777"></div>
<div class="a" style="left:1201px;top:367px;width:191px;height:1px;background:#777"></div>
<div class="a" style="left:1201px;top:386px;width:191px;height:1px;background:#777"></div>
<div class="a" style="left:1296px;top:329px;width:1px;height:77px;background:#777"></div>
<div class="a t" style="font-size:11px;line-height:13px;top:333.00px;color:#222;left:1205.5px;">Type</div>
<div class="a t" style="font-size:11px;line-height:13px;top:333.00px;color:#222;left:1300px;">Test Cases</div>
<div class="a t" style="font-size:11px;line-height:13px;top:352.00px;color:#222;left:1205.5px;">Simulation</div>
<div class="a t" style="font-size:11px;line-height:13px;top:352.00px;color:#222;left:1300px;">7</div>
<div class="a t" style="font-size:11px;line-height:13px;top:371.00px;color:#222;left:1205.5px;">Equivalence</div>
<div class="a t" style="font-size:11px;line-height:13px;top:371.00px;color:#222;left:1300px;">0</div>
<div class="a t" style="font-size:11px;line-height:13px;top:390.00px;color:#222;left:1205.5px;">Baseline</div>
<div class="a t" style="font-size:11px;line-height:13px;top:390.00px;color:#222;left:1300px;">0</div>
<div class="a t" style="font-size:13px;line-height:16px;top:438.00px;color:#222;left:1202px;">Test Cases with Tag</div>
<div class="a" style="left:1201px;top:459px;width:191px;height:96px;border:1px solid #777;background:#fff"></div>
<div class="a" style="left:1201px;top:478px;width:191px;height:1px;background:#777"></div>
<div class="a" style="left:1201px;top:497px;width:191px;height:1px;background:#777"></div>
<div class="a" style="left:1201px;top:516px;width:191px;height:1px;background:#777"></div>
<div class="a" style="left:1201px;top:535px;width:191px;height:1px;background:#777"></div>
<div class="a" style="left:1296px;top:459px;width:1px;height:96px;background:#777"></div>
<div class="a t" style="font-size:11px;line-height:13px;top:463.00px;color:#222;left:1205.5px;">Tag</div>
<div class="a t" style="font-size:11px;line-height:13px;top:463.00px;color:#222;left:1300px;">Test Cases</div>
<div class="a t" style="font-size:11px;line-height:13px;top:482.00px;color:#222;left:1205.5px;">1_Draft</div>
<div class="a t" style="font-size:11px;line-height:13px;top:482.00px;color:#222;left:1300px;">1</div>
<div class="a t" style="font-size:11px;line-height:13px;top:501.00px;color:#222;left:1205.5px;">2_Under_review</div>
<div class="a t" style="font-size:11px;line-height:13px;top:501.00px;color:#222;left:1300px;">2</div>
<div class="a t" style="font-size:11px;line-height:13px;top:520.00px;color:#222;left:1205.5px;">3_Reviewed</div>
<div class="a t" style="font-size:11px;line-height:13px;top:520.00px;color:#222;left:1300px;">2</div>
<div class="a t" style="font-size:11px;line-height:13px;top:539.00px;color:#222;left:1205.5px;">4_Released</div>
<div class="a t" style="font-size:11px;line-height:13px;top:539.00px;color:#222;left:1300px;">2</div>
<svg class="a" style="left:379px;top:603.8px;" width="12" height="6.5" viewBox="0 0 12 6.5"><polygon points="0,0 12,0 6.0,6.5" fill="#555"/></svg>
<div class="a t" style="font-size:13px;line-height:16px;top:599.00px;color:#222;left:398.1px;">Simulation Test Result Analysis</div>
<div class="a" style="left:378px;top:625px;width:336px;height:273px;background:#fff;border-radius:3px"></div>
<div class="a t" style="font-size:16px;line-height:19px;top:629.00px;color:#111;font-weight:bold;left:388px;">Model Test Status</div>
<svg class="a" style="left:390px;top:668px;" width="16" height="16" viewBox="0 0 16 16"><circle cx="8" cy="8" r="8" fill="#b7292a"/><rect x="6.80" y="3.00" width="2.40" height="6.00" rx="0.60" fill="#fff"/><rect x="6.80" y="10.60" width="2.40" height="2.40" fill="#fff"/></svg>
<svg class="a" style="left:410.3px;top:668.2px;" width="159.0" height="79.5" viewBox="0 0 159.0 79.5"><path d="M9.30 79.50 A70.2 70.2 0 0 1 149.70 79.50" fill="none" stroke="#bfbfbf" stroke-width="14.6"/></svg>
<div class="a t" style="font-size:23px;line-height:28px;top:718.00px;color:#1a1a1a;font-weight:bold;left:439.80px;width:100px;text-align:center;">0%</div>
<div class="a t" style="font-size:13px;line-height:16px;top:751.00px;color:#222;left:439.80px;width:100px;text-align:center;">Passed</div>
<svg class="a" style="left:614.5px;top:667.5px;" width="16" height="16" viewBox="0 0 16 16"><circle cx="8" cy="8" r="7.25" fill="#ccf7c4" stroke="#3aa63a" stroke-width="1.1"/><path d="M3.70 7.80 L7.00 11.10 L12.00 5.80" fill="none" stroke="#0a8a0a" stroke-width="1.00"/></svg>
<div class="a t" style="font-size:23px;line-height:28px;top:698.00px;color:#1a1a1a;font-weight:bold;left:628.00px;width:60px;text-align:center;">0</div>
<div class="a t" style="font-size:13px;line-height:16px;top:731.00px;color:#222;left:608.00px;width:100px;text-align:center;">Failed</div>
<svg class="a" style="left:389.8px;top:787.9000000000001px;" width="15.6" height="15.6" viewBox="0 0 15.6 15.6"><circle cx="7.8" cy="7.8" r="7.05" fill="#ccf7c4" stroke="#3aa63a" stroke-width="1.1"/><path d="M3.61 7.60 L6.83 10.82 L11.70 5.65" fill="none" stroke="#0a8a0a" stroke-width="0.97"/></svg>
<svg class="a" style="left:502px;top:788px;" width="16" height="16" viewBox="0 0 16 16"><circle cx="8" cy="8" r="8" fill="#b7292a"/><rect x="6.80" y="3.00" width="2.40" height="6.00" rx="0.60" fill="#fff"/><rect x="6.80" y="10.60" width="2.40" height="2.40" fill="#fff"/></svg>
<svg class="a" style="left:614.8px;top:788px;" width="16" height="16" viewBox="0 0 16 16"><circle cx="8" cy="8" r="8" fill="#b7292a"/><rect x="6.80" y="3.00" width="2.40" height="6.00" rx="0.60" fill="#fff"/><rect x="6.80" y="10.60" width="2.40" height="2.40" fill="#fff"/></svg>
<div class="a t" style="font-size:23px;line-height:28px;top:818.00px;color:#1a1a1a;font-weight:bold;left:403.00px;width:60px;text-align:center;">0</div>
<div class="a t" style="font-size:13px;line-height:16px;top:851.00px;color:#222;left:383.60px;width:100px;text-align:center;">Untested</div>
<div class="a t" style="font-size:23px;line-height:28px;top:818.00px;color:#1a1a1a;font-weight:bold;left:515.50px;width:60px;text-align:center;">6</div>
<div class="a t" style="font-size:13px;line-height:16px;top:851.00px;color:#222;left:495.90px;width:100px;text-align:center;">Not Run</div>
<div class="a t" style="font-size:23px;line-height:28px;top:818.00px;color:#1a1a1a;font-weight:bold;left:628.20px;width:60px;text-align:center;">1</div>
<div class="a t" style="font-size:13px;line-height:16px;top:851.00px;color:#222;left:608.50px;width:100px;text-align:center;">Disabled</div>
<div class="a" style="left:724px;top:625px;width:424px;height:273px;background:#fff;border-radius:3px"></div>
<div class="a t" style="font-size:16px;line-height:19px;top:629.00px;color:#111;font-weight:bold;left:735.3px;">Model Coverage</div>
<svg class="a" style="left:735.2px;top:661px;" width="16" height="16" viewBox="0 0 16 16"><circle cx="8" cy="8" r="8" fill="#b7292a"/><rect x="6.80" y="3.00" width="2.40" height="6.00" rx="0.60" fill="#fff"/><rect x="6.80" y="10.60" width="2.40" height="2.40" fill="#fff"/></svg>
<div class="a t" style="font-size:13px;line-height:16px;top:661.00px;color:#222;left:759px;">Aggregated Coverage</div>
<div class="a" style="left:936px;top:664px;width:10px;height:10px;background:#1654a3"></div>
<div class="a t" style="font-size:11px;line-height:13px;top:663.00px;color:#222;left:951.4px;">Achieved</div>
<div class="a" style="left:1006px;top:664px;width:10px;height:10px;background:#55b4ff"></div>
<div class="a t" style="font-size:11px;line-height:13px;top:663.00px;color:#222;left:1021.6px;">Justified</div>
<div class="a" style="left:1072px;top:664px;width:10px;height:10px;background:#b3dcfc"></div>
<div class="a t" style="font-size:11px;line-height:13px;top:663.00px;color:#222;left:1087px;">Missed</div>
<div class="a" style="left:778px;top:692px;width:348px;height:1px;background:#dcdcdc"></div>
<div class="a t" style="font-size:10px;line-height:12px;top:687.00px;color:#111;left:707.50px;width:60px;text-align:right;">100%</div>
<div class="a" style="left:778px;top:760px;width:348px;height:1px;background:#dcdcdc"></div>
<div class="a t" style="font-size:10px;line-height:12px;top:755.00px;color:#111;left:707.50px;width:60px;text-align:right;">50%</div>
<div class="a" style="left:778px;top:829px;width:348px;height:1px;background:#dcdcdc"></div>
<div class="a t" style="font-size:10px;line-height:12px;top:824.00px;color:#111;left:707.50px;width:60px;text-align:right;">0%</div>
<div class="a t" style="left:772.5px;top:791.4px;width:80px;height:12px;line-height:12px;font-size:12.5px;color:#111;text-align:center;transform:rotate(-90deg)">No data</div>
<div class="a t" style="font-size:11px;line-height:13px;top:839.00px;color:#222;left:772.50px;width:80px;text-align:center;">Execution</div>
<svg class="a" style="left:806.5px;top:862px;" width="12" height="12" viewBox="0 0 12 12"><circle cx="6" cy="6" r="6" fill="#b7292a"/><rect x="5.10" y="2.25" width="1.80" height="4.50" rx="0.45" fill="#fff"/><rect x="5.10" y="7.95" width="1.80" height="1.80" fill="#fff"/></svg>
<div class="a t" style="left:842.5px;top:791.4px;width:80px;height:12px;line-height:12px;font-size:12.5px;color:#111;text-align:center;transform:rotate(-90deg)">No data</div>
<div class="a t" style="font-size:11px;line-height:13px;top:839.00px;color:#222;left:842.50px;width:80px;text-align:center;">Decision</div>
<svg class="a" style="left:876.5px;top:862px;" width="12" height="12" viewBox="0 0 12 12"><circle cx="6" cy="6" r="6" fill="#b7292a"/><rect x="5.10" y="2.25" width="1.80" height="4.50" rx="0.45" fill="#fff"/><rect x="5.10" y="7.95" width="1.80" height="1.80" fill="#fff"/></svg>
<div class="a t" style="left:912.3px;top:791.4px;width:80px;height:12px;line-height:12px;font-size:12.5px;color:#111;text-align:center;transform:rotate(-90deg)">No data</div>
<div class="a t" style="font-size:11px;line-height:13px;top:839.00px;color:#222;left:912.30px;width:80px;text-align:center;">Condition</div>
<svg class="a" style="left:946.3px;top:862px;" width="12" height="12" viewBox="0 0 12 12"><circle cx="6" cy="6" r="6" fill="#b7292a"/><rect x="5.10" y="2.25" width="1.80" height="4.50" rx="0.45" fill="#fff"/><rect x="5.10" y="7.95" width="1.80" height="1.80" fill="#fff"/></svg>
<div class="a t" style="left:982.2px;top:791.4px;width:80px;height:12px;line-height:12px;font-size:12.5px;color:#111;text-align:center;transform:rotate(-90deg)">No data</div>
<div class="a t" style="font-size:11px;line-height:13px;top:839.00px;color:#222;left:982.20px;width:80px;text-align:center;">MC/DC</div>
<svg class="a" style="left:1016.2px;top:862px;" width="12" height="12" viewBox="0 0 12 12"><circle cx="6" cy="6" r="6" fill="#b7292a"/><rect x="5.10" y="2.25" width="1.80" height="4.50" rx="0.45" fill="#fff"/><rect x="5.10" y="7.95" width="1.80" height="1.80" fill="#fff"/></svg>
<div class="a t" style="left:1052px;top:791.4px;width:80px;height:12px;line-height:12px;font-size:12.5px;color:#111;text-align:center;transform:rotate(-90deg)">No data</div>
<div class="a t" style="font-size:11px;line-height:13px;top:839.00px;color:#222;left:1070.2px;">Int.</div>
<div class="a t" style="font-size:11px;line-height:13px;top:851.00px;color:#222;left:1070.2px;">Overflow</div>
<svg class="a" style="left:1086px;top:862px;" width="12" height="12" viewBox="0 0 12 12"><circle cx="6" cy="6" r="6" fill="#b7292a"/><rect x="5.10" y="2.25" width="1.80" height="4.50" rx="0.45" fill="#fff"/><rect x="5.10" y="7.95" width="1.80" height="1.80" fill="#fff"/></svg>
<div class="a" style="left:1158px;top:625px;width:251px;height:273px;background:#fff;border-radius:3px"></div>
<div class="a t" style="font-size:16px;line-height:19px;top:629.00px;color:#111;font-weight:bold;left:1169px;">Achieved Coverage Ratio</div>
<div class="a t" style="font-size:13px;line-height:16px;top:659.00px;color:#222;left:1175px;">Requirements-Based Tests</div>
<div class="a" style="left:1174px;top:680px;width:219px;height:77px;border:1px solid #777;background:#fff"></div>
<div class="a" style="left:1174px;top:699px;width:219px;height:1px;background:#777"></div>
<div class="a" style="left:1174px;top:718px;width:219px;height:1px;background:#777"></div>
<div class="a" style="left:1174px;top:737px;width:219px;height:1px;background:#777"></div>
<div class="a" style="left:1263px;top:680px;width:1px;height:77px;background:#777"></div>
<div class="a t" style="font-size:11px;line-height:13px;top:684.00px;color:#222;left:1178.5px;">Execution</div>
<div class="a t" style="font-size:11px;line-height:13px;top:684.00px;color:#222;left:1284.5px;">No data</div>
<div class="a t" style="font-size:11px;line-height:13px;top:703.00px;color:#222;left:1178.5px;">Decision</div>
<div class="a t" style="font-size:11px;line-height:13px;top:703.00px;color:#222;left:1284.5px;">No data</div>
<div class="a t" style="font-size:11px;line-height:13px;top:722.00px;color:#222;left:1178.5px;">Condition</div>
<div class="a t" style="font-size:11px;line-height:13px;top:722.00px;color:#222;left:1284.5px;">No data</div>
<div class="a t" style="font-size:11px;line-height:13px;top:741.00px;color:#222;left:1178.5px;">MC/DC</div>
<div class="a t" style="font-size:11px;line-height:13px;top:741.00px;color:#222;left:1284.5px;">No data</div>
<div class="a t" style="font-size:13px;line-height:16px;top:784.00px;color:#222;left:1175px;">Unit-Boundary Tests</div>
<div class="a" style="left:1174px;top:804px;width:219px;height:77px;border:1px solid #777;background:#fff"></div>
<div class="a" style="left:1174px;top:823px;width:219px;height:1px;background:#777"></div>
<div class="a" style="left:1174px;top:842px;width:219px;height:1px;background:#777"></div>
<div class="a" style="left:1174px;top:861px;width:219px;height:1px;background:#777"></div>
<div class="a" style="left:1263px;top:804px;width:1px;height:77px;background:#777"></div>
<div class="a t" style="font-size:11px;line-height:13px;top:808.00px;color:#222;left:1178.5px;">Execution</div>
<div class="a t" style="font-size:11px;line-height:13px;top:808.00px;color:#222;left:1284.5px;">No data</div>
<div class="a t" style="font-size:11px;line-height:13px;top:827.00px;color:#222;left:1178.5px;">Decision</div>
<div class="a t" style="font-size:11px;line-height:13px;top:827.00px;color:#222;left:1284.5px;">No data</div>
<div class="a t" style="font-size:11px;line-height:13px;top:846.00px;color:#222;left:1178.5px;">Condition</div>
<div class="a t" style="font-size:11px;line-height:13px;top:846.00px;color:#222;left:1284.5px;">No data</div>
<div class="a t" style="font-size:11px;line-height:13px;top:865.00px;color:#222;left:1178.5px;">MC/DC</div>
<div class="a t" style="font-size:11px;line-height:13px;top:865.00px;color:#222;left:1284.5px;">No data</div></body></html>
